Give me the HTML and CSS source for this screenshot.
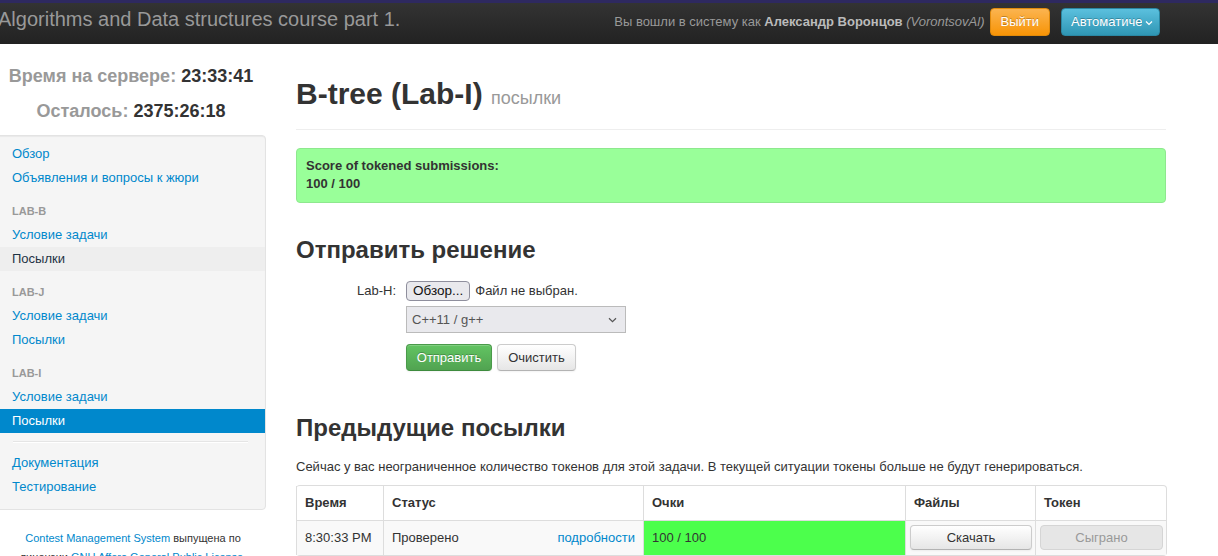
FILE: index.html
```html
<!DOCTYPE html>
<html lang="ru">
<head>
<meta charset="utf-8">
<title>B-tree (Lab-I) посылки</title>
<link rel="stylesheet" href="styles.css">
</head>
<body>
<header class="navbar">
  <div class="brand">Algorithms and Data structures course part 1.</div>
  <div class="nav-right">
    <span class="login-text">Вы вошли в систему как <b class="uname">Александр Воронцов</b> <i>(VorontsovAl)</i></span>
    <span class="btn-nav btn-warning">Выйти</span>
    <span class="btn-nav btn-info"><span class="clip">Автоматически</span><svg class="chev" width="8" height="6" viewBox="0 0 8 6"><path d="M1 1.5 L4 4.5 L7 1.5" fill="none" stroke="#fff" stroke-width="1.2"/></svg></span>
  </div>
</header>

<div class="page">
  <aside class="sidebar">
    <div class="timer">
      <p class="timer-line"><span class="t-label">Время на сервере:</span> <span class="t-value">23:33:41</span></p>
      <p class="timer-line second"><span class="t-label">Осталось:</span> <span class="t-value">2375:26:18</span></p>
    </div>
    <nav class="well">
      <ul class="nav-list">
        <li><a href="#">Обзор</a></li>
        <li><a href="#">Объявления и вопросы к жюри</a></li>
        <li class="nav-header">Lab-B</li>
        <li><a href="#">Условие задачи</a></li>
        <li class="hovered"><a href="#">Посылки</a></li>
        <li class="nav-header">Lab-J</li>
        <li><a href="#">Условие задачи</a></li>
        <li><a href="#">Посылки</a></li>
        <li class="nav-header">Lab-I</li>
        <li><a href="#">Условие задачи</a></li>
        <li class="active"><a href="#">Посылки</a></li>
        <li class="divider"></li>
        <li><a href="#">Документация</a></li>
        <li><a href="#">Тестирование</a></li>
      </ul>
    </nav>
    <p class="footer"><a href="#">Contest Management System</a> выпущена по лицензии <a href="#">GNU Affero General Public License</a>.</p>
  </aside>

  <main class="main">
    <div class="page-header">
      <h1>B-tree (Lab-I) <small>посылки</small></h1>
    </div>
    <div class="alert-score">
      <b>Score of tokened submissions:</b><br>
      <b>100 / 100</b>
    </div>

    <h2 class="h-submit">Отправить решение</h2>
    <div class="form">
      <div class="form-row">
        <label class="control-label">Lab-H:</label>
        <div class="controls file-line">
          <span class="file-btn">Обзор...</span>
          <span class="file-none">Файл не выбран.</span>
        </div>
      </div>
      <div class="form-row">
        <span class="control-label"></span>
        <div class="controls">
          <div class="select">
            <span>C++11 / g++</span>
            <svg width="9" height="6" viewBox="0 0 9 6"><path d="M1 1.2 L4.5 4.6 L8 1.2" fill="none" stroke="#555" stroke-width="1.2"/></svg>
          </div>
        </div>
      </div>
      <div class="form-row actions">
        <span class="control-label"></span>
        <div class="controls buttons">
          <span class="btn btn-success">Отправить</span>
          <span class="btn">Очистить</span>
        </div>
      </div>
    </div>

    <h2 class="h-prev">Предыдущие посылки</h2>
    <p class="tokens">Сейчас у вас неограниченное количество токенов для этой задачи. В текущей ситуации токены больше не будут генерироваться.</p>

    <table class="subs">
      <colgroup>
        <col class="c-time"><col class="c-status"><col class="c-score"><col class="c-files"><col class="c-token">
      </colgroup>
      <thead>
        <tr><th>Время</th><th>Статус</th><th>Очки</th><th>Файлы</th><th>Токен</th></tr>
      </thead>
      <tbody>
        <tr>
          <td>8:30:33 PM</td>
          <td><span class="status">Проверено</span><a class="details" href="#">подробности</a></td>
          <td class="score-ok">100 / 100</td>
          <td class="btn-cell"><span class="btn btn-block">Скачать</span></td>
          <td class="btn-cell"><span class="btn btn-block disabled">Сыграно</span></td>
        </tr>
      </tbody>
    </table>
  </main>
</div>
</body>
</html>
```

FILE: styles.css
```css
* { box-sizing: border-box; }

html, body {
  margin: 0;
  padding: 0;
}

body {
  font-family: "Liberation Sans", Arial, sans-serif;
  font-size: 13px;
  line-height: 18px;
  color: #333;
  background: #fff;
  overflow: hidden;
}

a { color: #0088cc; text-decoration: none; }

/* ---------- navbar ---------- */
.navbar {
  height: 44px;
  border-top: 3px solid #2e2960;
  background: linear-gradient(#333333, #222222);
  display: flex;
  justify-content: space-between;
  align-items: flex-start;
  padding-right: 58px;
}

.brand {
  margin-left: -2px;
  padding-top: 6px;
  font-size: 20px;
  line-height: 20px;
  color: #999;
  white-space: nowrap;
}

.nav-right {
  display: flex;
  align-items: center;
  padding-top: 5px;
  height: 33px;
}

.login-text {
  color: #999;
  white-space: nowrap;
  margin-right: 5px;
}
.login-text .uname { color: #bbb; }
.login-text i { color: #999; }

.btn-nav {
  height: 28px;
  display: flex;
  align-items: center;
  color: #fff;
  font-size: 13px;
  border-radius: 4px;
  border: 1px solid rgba(0,0,0,0.15);
  text-shadow: 0 -1px 0 rgba(0,0,0,0.25);
}
.btn-warning {
  padding: 0 10px;
  background: linear-gradient(#fbb450, #f89406);
  border-color: #e08a0c;
}
.btn-info {
  margin-left: 11px;
  width: 99px;
  padding: 0 6px 0 9px;
  background: linear-gradient(#5bc0de, #2f96b4);
  border-color: #2a87a3;
  justify-content: space-between;
}
.btn-info .clip {
  width: 71px;
  overflow: hidden;
  white-space: nowrap;
}
.btn-info .chev { margin-top: 2px; }

/* ---------- layout ---------- */
.page {
  display: flex;
  gap: 30px;
  padding-right: 52px;
}

.sidebar {
  width: 266px;
  flex: none;
}

.main {
  flex: 1;
  min-width: 0;
}

/* ---------- sidebar ---------- */
.timer {
  padding-top: 20px;
  padding-right: 4px;
  text-align: center;
}
.timer-line {
  margin: 0;
  font-size: 18px;
  line-height: 24px;
  font-weight: bold;
}
.timer-line.second { margin-top: 11px; }
.t-label { color: #999; }
.t-value { color: #333; }

.well {
  margin-top: 12px;
  margin-left: -4px;
  width: 270px;
  background: #f5f5f5;
  border: 1px solid #e3e3e3;
  border-radius: 4px;
  box-shadow: inset 0 1px 1px rgba(0,0,0,0.05);
  padding: 6px 0 10px;
}

.nav-list {
  list-style: none;
  margin: 0;
  padding: 0;
}
.nav-list li a {
  display: block;
  padding: 3px 12px 3px 15px;
  line-height: 18px;
  color: #0088cc;
}
.nav-list .nav-header {
  margin-top: 9px;
  padding: 3px 12px 3px 15px;
  font-size: 11px;
  font-weight: bold;
  line-height: 18px;
  color: #999;
  text-transform: uppercase;
}
.nav-list .hovered a {
  background: #eeeeee;
  color: #1e3344;
}
.nav-list .active a {
  background: #0088cc;
  color: #fff;
}
.nav-list .divider {
  height: 2px;
  margin: 8px 17px 8px 16px;
  border-top: 1px solid #e5e5e5;
  border-bottom: 1px solid #fff;
}

.footer {
  margin: 19px 0 0;
  padding: 0 16px;
  font-size: 11px;
  line-height: 19px;
  text-align: center;
}

/* ---------- main ---------- */
.page-header {
  margin-top: 32px;
  padding-bottom: 17px;
  border-bottom: 1px solid #eee;
  margin-bottom: 18px;
}
h1 {
  margin: 0;
  height: 36px;
  font-size: 30px;
  line-height: 36px;
  font-weight: bold;
  color: #333;
}
h1 small {
  font-size: 18px;
  line-height: 1;
  font-weight: normal;
  color: #999;
}

.alert-score {
  background: #99ff99;
  border: 1px solid #8ee88e;
  border-radius: 4px;
  padding: 8px 9px 9px;
  line-height: 18px;
}

h2 {
  margin: 0;
  font-size: 24px;
  line-height: 36px;
  font-weight: bold;
  color: #333;
}
.h-submit { margin-top: 29px; }

.form { margin-top: 13px; }
.form-row {
  display: flex;
  align-items: center;
  gap: 10px;
}
.form-row + .form-row { margin-top: 5px; }
.form-row.actions { margin-top: 11px; }
.control-label {
  width: 100px;
  text-align: right;
  flex: none;
}
.controls { display: flex; align-items: center; }
.file-line { gap: 5px; }

.file-btn {
  height: 20px;
  padding: 0 6px;
  display: flex;
  align-items: center;
  background: #e9e9ed;
  border: 1px solid #8f8f9d;
  border-radius: 4px;
  color: #111;
  font-size: 13.5px;
}
.file-none { color: #333; }

.select {
  width: 220px;
  height: 27px;
  display: flex;
  align-items: center;
  justify-content: space-between;
  padding: 0 8px 0 5px;
  background: #e9e9ed;
  border: 1px solid #bbb;
  color: #555;
}

.buttons { gap: 5px; }
.btn {
  display: inline-flex;
  align-items: center;
  justify-content: center;
  height: 27px;
  padding: 0 10px;
  font-size: 13px;
  color: #333;
  background: linear-gradient(#ffffff, #e6e6e6);
  border: 1px solid #ccc;
  border-bottom-color: #b3b3b3;
  border-radius: 4px;
  box-shadow: inset 0 1px 0 rgba(255,255,255,0.2), 0 1px 2px rgba(0,0,0,0.05);
}
.btn-success {
  width: 86px;
  color: #fff;
  background: linear-gradient(#62c462, #51a351);
  border-color: #4a9a4a #4a9a4a #3d8b3d;
  text-shadow: 0 -1px 0 rgba(0,0,0,0.25);
}
.buttons .btn:not(.btn-success) { width: 79px; }

.h-prev { margin-top: 39px; }

.tokens {
  margin: 12px 0 0;
}

/* ---------- table ---------- */
.subs {
  margin-top: 9px;
  width: 100%;
  table-layout: fixed;
  border-collapse: separate;
  border-spacing: 0;
  border: 1px solid #ddd;
  border-left: 0;
  border-radius: 4px;
}
.c-time { width: 87px; }
.c-status { width: 260px; }
.c-score { width: 262px; }
.c-files { width: 130px; }
.c-token { width: 131px; }

.subs th, .subs td {
  padding: 8px;
  text-align: left;
  vertical-align: top;
  border-left: 1px solid #ddd;
  line-height: 18px;
}
.subs th { font-weight: bold; }
.subs td { border-top: 1px solid #ddd; background: #f9f9f9; }
.subs td.score-ok { background: #4cff4c; }
.details { float: right; }
.subs td.btn-cell { padding: 4px 3px 4px 4px; }
.btn-block { width: 100%; height: 25px; }
.btn.disabled {
  color: #999;
  background: #e6e6e6;
  border-color: #d5d5d5;
  box-shadow: none;
}
```
